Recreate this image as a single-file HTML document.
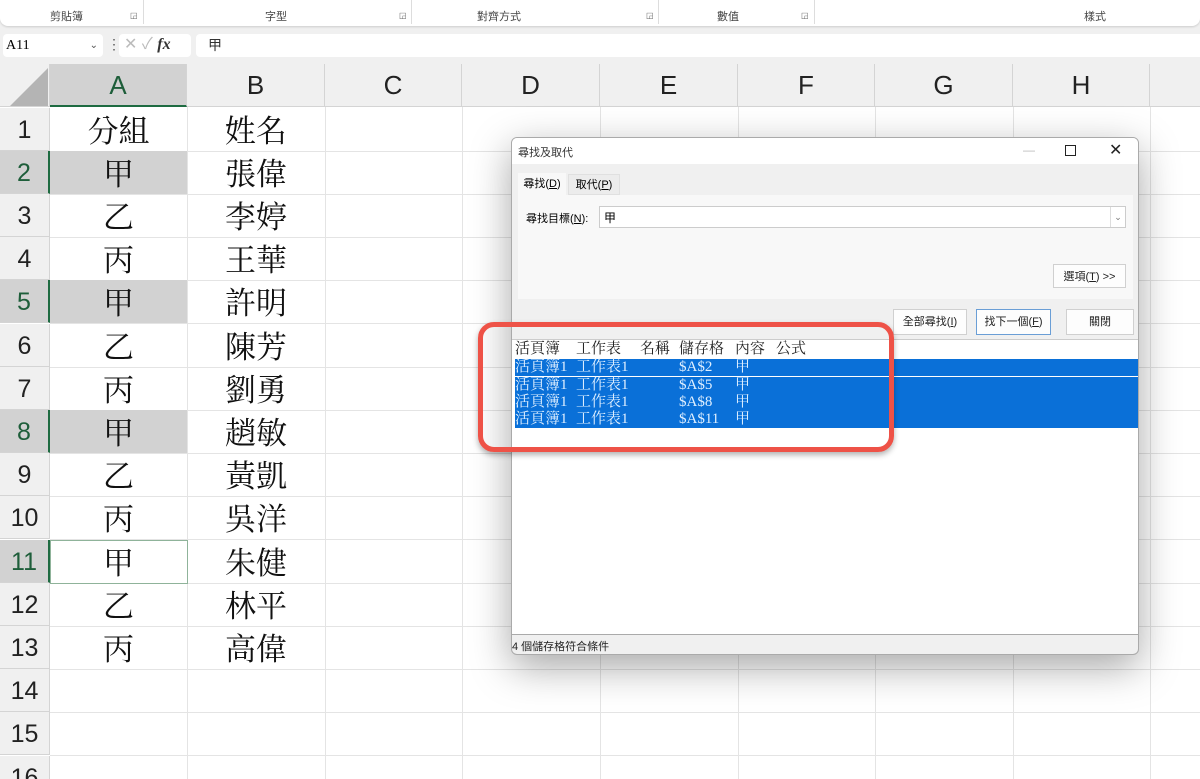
<!DOCTYPE html>
<html><head><meta charset="utf-8"><style>
*{margin:0;padding:0;box-sizing:border-box}
html,body{width:1200px;height:779px;overflow:hidden}
body{background:#f0f0f0;position:relative;font-family:"Liberation Sans","Noto Sans CJK TC",sans-serif;color:#000}
.a{position:absolute}
.rib{left:0;top:0;width:1200px;height:26px;background:#fff;border-radius:0 0 8px 8px;box-shadow:0 1px 2px rgba(0,0,0,.15)}
.gl{font-size:11px;color:#444;top:8px}
.sep{top:0;width:1px;height:24px;background:#ddd}
.dl{font-size:8px;color:#666;top:11px}
.grid{left:0;top:64px;width:1200px;height:715px;background:#fff}
.ch{top:64px;height:43px;background:#f0f0f0;border-right:1px solid #d4d4d4;border-bottom:1px solid #d4d4d4;font-size:26px;text-align:center;line-height:43px;color:#222}
.rh{left:0;width:50px;background:#f0f0f0;border-bottom:1px solid #d4d4d4;border-right:1px solid #d4d4d4;font-size:25px;text-align:center;color:#222}
.hl{height:1px;background:#e4e4e4;left:50px;width:1150px}
.vl{width:1px;background:#e4e4e4;top:107px;height:672px}
.c{font-family:"Liberation Serif","Noto Serif CJK TC",serif;font-size:31px;text-align:center;color:#111}
.dlg{left:511px;top:137px;width:628px;height:518px;background:#f0f0f0;border:1px solid #aaa;border-radius:6px;box-shadow:0 12px 40px rgba(0,0,0,.35);font-size:12px;overflow:hidden}
.btn{background:#fdfdfd;border:1px solid #d0d0d0;font-size:12px;text-align:center;line-height:24px;color:#222}
.row{left:3px;width:623px;height:17px;background:#0a70d8;color:#dfefff;font-family:"Liberation Serif","Noto Serif CJK TC",serif;font-size:15px;line-height:17px}
.row span,.hd span{position:absolute;top:0}
</style></head><body>
<div class="a rib"></div>
<div class="a gl" style="left:50px">剪貼簿</div><div class="a dl" style="left:130px">◲</div><div class="a sep" style="left:143px"></div>
<div class="a gl" style="left:265px">字型</div><div class="a dl" style="left:399px">◲</div><div class="a sep" style="left:411px"></div>
<div class="a gl" style="left:477px">對齊方式</div><div class="a dl" style="left:646px">◲</div><div class="a sep" style="left:658px"></div>
<div class="a gl" style="left:717px">數值</div><div class="a dl" style="left:801px">◲</div><div class="a sep" style="left:814px"></div>
<div class="a gl" style="left:1084px">樣式</div>
<div class="a" style="left:3px;top:34px;width:100px;height:23px;background:#fff;border-radius:4px;font-family:'Liberation Serif',serif;font-size:14px;line-height:23px;padding-left:3px">A11<span style="position:absolute;right:5px;font-size:10px;color:#555">⌄</span></div>
<div class="a" style="left:107px;top:36px;font-size:14px;color:#555">⋮</div>
<div class="a" style="left:119px;top:34px;width:72px;height:23px;background:#fff;border-radius:4px;font-size:16px;line-height:22px;color:#bbb;padding-left:5px">✕ ✓ <i style="font-family:'Liberation Serif',serif;color:#333;font-weight:bold">fx</i></div>
<div class="a" style="left:196px;top:34px;width:1004px;height:23px;background:#fff;border-radius:4px 0 0 4px;font-size:14px;line-height:23px;padding-left:12px;color:#333">甲</div>
<div class="a grid"></div>
<div class="a" style="left:0;top:64px;width:50px;height:43px;background:#f0f0f0;border-right:1px solid #d4d4d4;border-bottom:1px solid #d4d4d4"></div>
<svg class="a" style="left:8px;top:68px" width="40" height="38"><polygon points="40,0 40,38 2,38" fill="#b4b4b4"/></svg>
<div class="a ch" style="left:50px;width:137px;background:#d2d2d2;color:#1e5e3a;border-bottom:2px solid #1e6b41">A</div>
<div class="a ch" style="left:187px;width:138px">B</div>
<div class="a ch" style="left:325px;width:137px">C</div>
<div class="a ch" style="left:462px;width:138px">D</div>
<div class="a ch" style="left:600px;width:138px">E</div>
<div class="a ch" style="left:738px;width:137px">F</div>
<div class="a ch" style="left:875px;width:138px">G</div>
<div class="a ch" style="left:1013px;width:137px">H</div>
<div class="a ch" style="left:1150px;width:60px"></div>
<div class="a vl" style="left:187px"></div><div class="a vl" style="left:325px"></div><div class="a vl" style="left:462px"></div><div class="a vl" style="left:600px"></div><div class="a vl" style="left:738px"></div><div class="a vl" style="left:875px"></div><div class="a vl" style="left:1013px"></div><div class="a vl" style="left:1150px"></div>
<div id="rows"></div>
<script>
var A=["分組","甲","乙","丙","甲","乙","丙","甲","乙","丙","甲","乙","丙"],B=["姓名","張偉","李婷","王華","許明","陳芳","劉勇","趙敏","黃凱","吳洋","朱健","林平","高偉"];
var h="";for(var i=0;i<16;i++){var t=107.5+i*43.2,hl=(i==1||i==4||i==7),sel=(i==10);
if(hl)h+='<div class="a" style="left:50px;top:'+t+'px;width:137px;height:43px;background:#d2d2d2"></div>';
h+='<div class="a rh" style="top:'+t+'px;height:43.2px;line-height:45px;'+((hl||sel)?'background:#d2d2d2;color:#1e5e3a;border-right:2px solid #1e6b41;':'')+'">'+(i+1)+'</div>';
h+='<div class="a hl" style="top:'+(t+43)+'px"></div>';
if(sel)h+='<div class="a" style="left:50px;top:'+t+'px;width:138px;height:44px;border:1px solid #8fb39a"></div>';
if(i<13){h+='<div class="a c" style="left:50px;width:137px;top:'+(t+3)+'px;line-height:42px">'+A[i]+'</div><div class="a c" style="left:187px;width:138px;top:'+(t+3)+'px;line-height:42px">'+B[i]+'</div>';}}
document.getElementById("rows").innerHTML=h;
</script>
<div class="a dlg">
 <div class="a" style="left:0;top:0;width:628px;height:26px;background:#fff"></div>
 <div class="a" style="left:6px;top:6px;font-size:11px;color:#333">尋找及取代</div>
 <div class="a" style="left:511px;top:5px;color:#bbb">—</div>
 <div class="a" style="left:553px;top:7px;width:11px;height:11px;border:1.5px solid #222"></div>
 <div class="a" style="left:597px;top:2px;font-size:16px;color:#222">✕</div>
 <div class="a" style="left:6px;top:35px;width:48px;height:22px;background:#f8f8f8;font-size:11px;line-height:22px;text-align:center">尋找(<u>D</u>)</div>
 <div class="a" style="left:56px;top:36px;width:52px;height:21px;background:#ececec;border:1px solid #e0e0e0;font-size:11px;line-height:20px;text-align:center">取代(<u>P</u>)</div>
 <div class="a" style="left:6px;top:57px;width:615px;height:104px;background:#f8f8f8"></div>
 <div class="a" style="left:14px;top:72px;font-size:11px">尋找目標(<u>N</u>):</div>
 <div class="a" style="left:87px;top:68px;width:527px;height:22px;background:#fff;border:1px solid #ccc;font-size:12px;padding:2px 4px">甲<span style="position:absolute;right:0;top:0;width:15px;height:20px;border-left:1px solid #ddd;font-size:9px;color:#777;text-align:center;line-height:20px">⌄</span></div>
 <div class="a btn" style="left:541px;top:126px;width:73px;height:24px;font-size:11px">選項(<u>T</u>) &gt;&gt;</div>
 <div class="a btn" style="left:381px;top:171px;width:74px;height:26px;font-size:11px">全部尋找(<u>I</u>)</div>
 <div class="a btn" style="left:464px;top:171px;width:75px;height:26px;border-color:#6a9ed6;font-size:11px">找下一個(<u>F</u>)</div>
 <div class="a btn" style="left:554px;top:171px;width:68px;height:26px;font-size:11px">關閉</div>
 <div class="a" style="left:0;top:201px;width:627px;height:296px;background:#fff;border-top:1px solid #ccc;border-bottom:1px solid #aaa"></div>
 <div class="a hd" style="left:3px;top:203px;height:17px;width:623px;font-family:'Liberation Serif','Noto Serif CJK TC',serif;font-size:15px;line-height:17px;color:#222">
  <span style="left:0">活頁簿</span><span style="left:61px">工作表</span><span style="left:125px">名稱</span><span style="left:164px">儲存格</span><span style="left:220px">內容</span><span style="left:261px">公式</span></div>
 <div class="a row" style="top:221px"><span style="left:0">活頁簿1</span><span style="left:61px">工作表1</span><span style="left:164px">$A$2</span><span style="left:220px">甲</span></div>
 <div class="a row" style="top:239px"><span style="left:0">活頁簿1</span><span style="left:61px">工作表1</span><span style="left:164px">$A$5</span><span style="left:220px">甲</span></div>
 <div class="a row" style="top:256px"><span style="left:0">活頁簿1</span><span style="left:61px">工作表1</span><span style="left:164px">$A$8</span><span style="left:220px">甲</span></div>
 <div class="a row" style="top:273px"><span style="left:0">活頁簿1</span><span style="left:61px">工作表1</span><span style="left:164px">$A$11</span><span style="left:220px">甲</span></div>
 <div class="a" style="left:0;top:500px;font-size:11px;color:#222">4 個儲存格符合條件</div>
</div>
<div class="a" style="left:478px;top:322px;width:416px;height:130px;border:5px solid #ee5247;border-radius:16px;box-shadow:0 3px 6px rgba(0,0,0,.3)"></div>
</body></html>
